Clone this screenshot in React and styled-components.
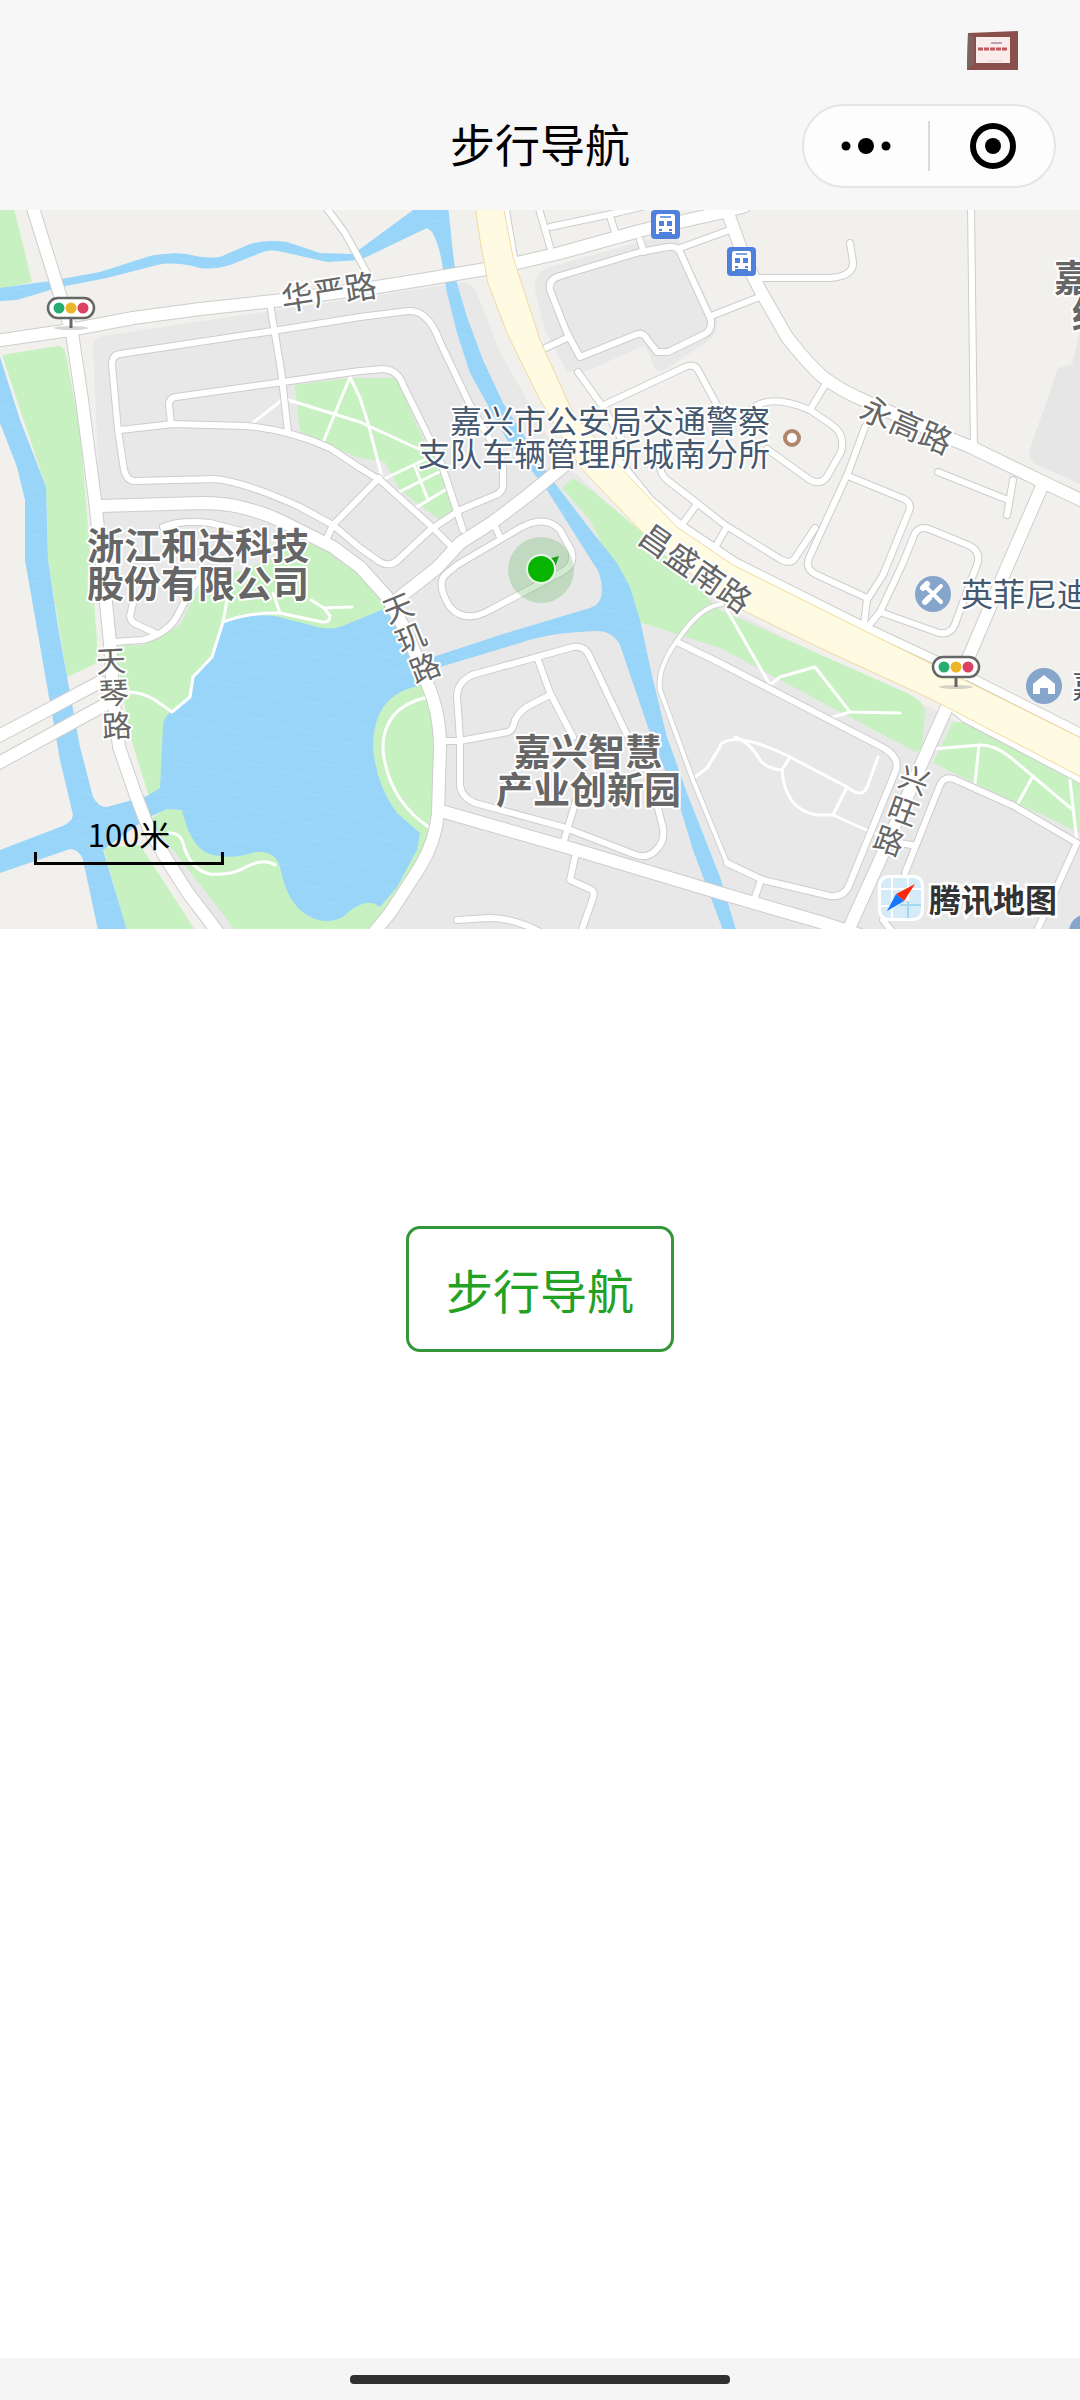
import styled, { createGlobalStyle } from "styled-components";

const GlobalStyle = createGlobalStyle`
  * {
    box-sizing: border-box;
  }
  body {
    margin: 0;
    background: #fff;
    font-family: "Noto Sans CJK SC", "Noto Sans", sans-serif;
  }
`;

// road centre lines, grouped by width
const mainRoads = [
  "M32 205L60 295L72 333L82 400L95 500L106 603L110 643L113 693L119 747L135 793L148 827L167 860L188 893L220 935",
  "M-5 341L70 330L133 318L200 309L283 300L377 287L427 279L480 270L517 263L560 253L643 230L720 213L745 206",
  "M100 506L200 503Q224 503 240 507Q265 513 283 522L333 547L360 567L387 597L407 633L427 683Q440 712 440 747L438 813Q436 840 420 867L390 913L372 935",
  "M725 205L745 260L760 290L787 337Q808 364 823 377Q840 390 863 400L937 433L973 448L1043 482L1085 502",
  "M1043 484L1010 560L973 647L947 707L920 767L880 860L846 935",
  "M441 811L563 846L720 893L820 922L860 935",
  "M-5 738L100 682",
  "M-5 765L110 702",
  "M400 597L437 568L460 543L493 522L527 496L570 461",
];

const streets = [
  "M270 304L281 370L288 432",
  "M360 317L273 331L120 354Q112 355 112 365L118 430L124 470Q127 481 135 481L215 479Q245 482 300 507L333 525L360 548L380 562Q389 567 397 561L430 530L460 510L498 494Q504 490 503 483L503 462L470 405L440 342Q428 309 408 311L360 317",
  "M171 423L169 405Q169 398 176 397L283 382L360 371L383 369Q398 370 403 385L440 460L450 490L463 530",
  "M120 430L173 424L247 426Q290 430 330 448L360 468L380 480L430 525L452 547",
  "M379 478L333 525L327 538",
  "M113 642L143 640Q165 634 175 620L190 592L205 570",
  "M133 603L130 616Q131 623 138 625L155 633",
  "M163 527Q180 520 210 523L245 532",
  "M457 565L520 528Q545 514 560 530L571 550Q576 565 562 572L490 610Q465 624 450 607Q436 585 445 575L457 565",
  "M494 524L500 537",
  "M328 210L345 233L368 275",
  "M538 205L550 247",
  "M550 227L607 215L645 206",
  "M610 216L615 232",
  "M640 252L560 276Q548 279 550 290L567 333L580 357L635 335Q643 331 647 339L657 352L668 352L705 334Q712 330 711 320L680 252Q677 246 668 247L640 252",
  "M640 240L644 252",
  "M680 248L727 231",
  "M711 316L757 298",
  "M543 349L567 338",
  "M578 372L603 407L625 445",
  "M606 404L685 367Q694 363 698 370L717 405",
  "M660 465Q660 474 667 480L697 503L725 525L780 559Q791 565 795 558L815 528",
  "M697 504L681 526",
  "M725 530L716 546",
  "M760 278L830 278Q854 276 853 262L850 243",
  "M971 205L974 450",
  "M825 385L810 410",
  "M752 409Q770 393 810 410L832 425Q846 435 841 452L828 475Q822 486 810 480L767 449",
  "M865 427L848 473L809 558Q805 568 815 574L867 598",
  "M848 476L904 499Q912 503 909 511L883 575L867 600L863 632",
  "M865 630L880 612L902 565L913 538Q917 525 929 529L968 545Q980 550 978 562L955 624Q951 635 939 633L880 612",
  "M938 472L1008 500",
  "M1013 480L1007 515",
  "M677 642L720 663L880 746Q900 756 896 770L850 883Q845 898 830 896L763 880L727 863",
  "M761 880L753 903",
  "M905 873L940 785Q944 776 954 779L1014 806L1077 843L1035 935",
  "M887 841L912 845",
  "M443 741L460 741L508 732Q513 730 515 720Q520 710 532 704L550 695",
  "M537 657L550 693L573 737",
  "M627 735L590 657Q585 645 573 647L472 675Q457 682 457 697L460 740L460 785Q461 797 475 803L563 827L636 855Q648 859 656 850Q665 842 663 828L657 805",
  "M563 844L577 797",
  "M575 857L570 880L590 889Q595 891 593 898L580 935",
  "M457 920L488 918Q515 918 540 932",
  "M883 920L895 935",
];

const lanes = [
  "M677 641Q657 668 660 690L693 780L727 863",
  "M677 641Q700 606 722 604",
];

const paths = [
  "M350 377L322 445",
  "M350 377L360 398L368 423L382 477",
  "M282 398L360 422L423 451",
  "M250 425L282 400",
  "M382 480L430 457",
  "M397 493L443 470",
  "M417 507L450 487",
  "M415 467L428 500",
  "M227 600L223 622L212 657L193 677L190 697L172 712L155 700Q142 692 127 692",
  "M223 622Q250 612 280 613L322 622Q330 623 330 616L324 608L352 607",
  "M273 593L280 613",
  "M311 600L324 608",
  "M168 833Q180 832 183 843Q190 870 210 874Q232 876 248 866Q265 858 275 865",
  "M428 697Q382 707 383 750Q388 800 430 828",
  "M727 610L770 685L780 677L815 667L850 712L900 713",
  "M850 712L830 718",
  "M720 745Q735 730 790 757L847 787Q863 800 868 785L878 757",
  "M735 737Q750 742 760 760Q767 769 782 770L790 757",
  "M782 770Q785 810 817 815L833 815L873 833L900 840",
  "M847 787L833 815",
  "M720 747L707 768L695 777",
  "M933 749L980 745Q995 745 1010 757L1073 810",
  "M979 745L975 783",
  "M1033 776L1017 805",
  "M1070 780L1077 843",
];

const greens = [
  "M0 205L13 205L32 282L0 289Z",
  "M2 355L58 346Q64 346 66 355L80 430L88 527L97 640L97 663L67 677L48 560L46 487Z",
  "M115 646L143 645L180 625L200 585L270 560L305 540L335 548L392 607L428 690L438 740L436 820L415 870L376 930L235 930L150 820L205 780L150 800L130 735L122 690Z",
  "M103 848L140 845L195 930L127 930Z",
  "M295 385L350 378L397 378L423 440L448 477L455 510L440 520L400 490L385 462L360 458L300 433Z",
  "M573 478L595 493L643 533L720 610L907 693Q925 702 925 713L923 740Q920 754 914 751L720 648L640 622L590 520L562 488Z",
  "M953 722L965 722L1080 784L1080 833L933 763Z",
];

const waters = [
  "M0 288L50 281L100 272L150 256Q170 252 187 254Q205 259 220 257L250 244Q266 239 287 242L320 253L353 254L360 249L420 205L448 205L453 253L457 283L467 317L483 360L503 403L527 440L547 473L593 533L617 563L630 587L640 620L653 680L667 737L687 793L720 877L736 930L723 930L693 850L680 807L650 733L620 645Q612 631 598 631Q550 632 520 643L430 670L430 658L503 634L590 608Q602 604 602 590Q602 574 593 563L547 490L507 440L470 373L457 333L447 293L442 263Q439 244 432 232L427 228L360 260L327 262L283 252Q270 249 263 252L230 265Q213 270 200 268Q175 261 157 265L107 278L60 287L17 300L0 301Z",
  "M0 357L20 420L33 453L46 487L48 560L58 627L70 693L80 747L93 797Q98 807 107 807L147 796L160 788L163 727Q163 718 170 713L190 697L193 677L212 657L223 623Q245 613 275 616L310 625Q330 632 345 625L384 609L400 620L424 685Q373 692 373 747Q376 785 397 813L420 833L417 850L397 887L380 907Q365 895 343 917Q325 926 307 915Q287 903 280 867Q275 850 255 852Q230 861 207 853Q190 845 182 810L167 809L147 818L103 850L127 930L98 930L83 860Q80 850 70 849L0 873L0 850L60 827Q72 823 73 815L60 760L25 560L25 500L17 467L0 423Z",
];

const highway =
  "M475 205L480 240L488 283L507 333L540 400L580 467L640 530L720 599L820 648L933 700L1085 779L1085 740L863 630L733 565L677 527L620 467L573 413L540 340L513 257L503 205Z";

const sideRoads = [
  "M504 205L513 257",
  "M620 463L650 500L680 525L735 562L865 627L940 662L1085 735",
  "M947 703L965 718L1085 781",
];

const Screen = styled.div`
  display: flex;
  flex-direction: column;
  min-height: 100vh;
`;

const Header = styled.header`
  background: #f7f7f7;
`;

const StatusBar = styled.div`
  display: flex;
  justify-content: flex-end;
  height: 82px;
  padding: 30px 61px 0;
`;

const NavBar = styled.div`
  display: grid;
  grid-template-columns: 1fr auto 1fr;
  align-items: center;
  height: 128px;
  padding: 0 24px;
`;

const Title = styled.h1`
  grid-column: 2;
  margin: 0;
  padding-bottom: 4px;
  color: #000;
  font-size: 45px;
  font-weight: 400;
  line-height: 64px;
`;

const Capsule = styled.div`
  display: flex;
  align-items: center;
  justify-self: end;
  width: 254px;
  height: 84px;
  border: 2px solid #e5e5e5;
  border-radius: 42px;
  background: #fdfdfd;
`;

const CapsuleButton = styled.button`
  display: flex;
  flex: 1;
  align-items: center;
  justify-content: center;
  height: 50px;
  padding: 0;
  border: 0;
  background: none;
`;

const CapsuleDivider = styled.span`
  width: 2px;
  height: 50px;
  background: #dadada;
`;

const MapArea = styled.section`
  position: relative;
  overflow: hidden;
`;

const MapCanvas = styled.svg`
  display: block;
  width: 100%;
  height: auto;
`;

const Lines = styled.g`
  fill: none;
  stroke: ${(p) => p.$color};
  stroke-width: ${(p) => p.$w};
  stroke-linecap: round;
  stroke-linejoin: round;
`;

const Label = styled.text`
  fill: ${(p) => p.$color || "#666"};
  font-size: ${(p) => p.$size || 30}px;
  font-weight: ${(p) => (p.$bold ? 700 : 400)};
  stroke: #fff;
  stroke-width: 4px;
  stroke-linejoin: round;
  paint-order: stroke;
`;

const ScaleBar = styled.div`
  position: absolute;
  left: 34px;
  bottom: 64px;
  width: 190px;
  height: 52px;
  color: #000;
  font-size: 31px;
  line-height: 42px;
  text-align: center;

  &::after {
    content: "";
    position: absolute;
    inset: auto 0 0;
    height: 10px;
    border: 3px solid #000;
    border-top: 0;
  }
`;

const Attribution = styled.div`
  position: absolute;
  right: 23px;
  bottom: 8px;
  display: flex;
  align-items: center;
  gap: 5px;
  color: #333;
  font-size: 32px;
  font-weight: 700;
  line-height: 46px;
  paint-order: stroke;
  -webkit-text-stroke: 5px #fff;
`;

const Main = styled.main`
  display: flex;
  flex: 1;
  align-items: flex-start;
  justify-content: center;
  padding-top: 297px;
`;

const NavigateButton = styled.button`
  padding: 28px 37px;
  border: 3px solid #339638;
  border-radius: 14px;
  background: #fff;
  color: #22a122;
  font-family: inherit;
  font-size: 47px;
  line-height: 64px;
`;

const HomeBar = styled.footer`
  display: flex;
  justify-content: center;
  height: 42px;
  padding-top: 17px;
  background: #f5f5f5;
`;

const HomeIndicator = styled.div`
  width: 380px;
  height: 9px;
  border-radius: 4px;
  background: #303030;
`;

const TrafficLight = ({ x, y }) => (
  <g transform={`translate(${x} ${y})`}>
    <ellipse cx="0" cy="20" rx="17" ry="2" fill="#999" opacity="0.4" />
    <path d="M0 10V20" stroke="#666" strokeWidth="3" />
    <rect x="-23" y="-10" width="46" height="20" rx="10" fill="#fff" stroke="#666" strokeWidth="2.5" />
    <circle cx="-12" r="5.5" fill="#27ac72" />
    <circle r="5.5" fill="#edb526" />
    <circle cx="12" r="5.5" fill="#dc4163" />
  </g>
);

const BusStop = ({ x, y }) => (
  <g transform={`translate(${x} ${y})`}>
    <rect width="29" height="29" rx="4" fill="#4f80dc" />
    <path d="M7 4H22Q24 4 24 7V24H21V22H8V24H5V7Q5 4 7 4Z" fill="#fff" />
    <path d="M9 7H20" stroke="#4f80dc" strokeWidth="1.5" />
    <path d="M8 11H13V16H8ZM16 11H21V16H16ZM8 19H11V21H8ZM18 19H21V21H18Z" fill="#4f80dc" />
  </g>
);

// street name that runs down the road, one glyph per point
const StreetName = ({ text, points, angle }) => (
  <g>
    {[...text].map((char, i) => (
      <Label
        key={char}
        $size={30}
        textAnchor="middle"
        y="11"
        transform={`translate(${points[i]}) rotate(${angle})`}
      >
        {char}
      </Label>
    ))}
  </g>
);

const Strokes = ({ lines, color, w }) => (
  <Lines $color={color} $w={w}>
    {lines.map((d) => (
      <path key={d} d={d} />
    ))}
  </Lines>
);

const CityMap = () => (
  <MapCanvas viewBox="0 210 1080 719" role="img" aria-label="地图">
    <defs>
      <pattern id="ripple" width="74" height="46" patternUnits="userSpaceOnUse">
        <path
          d="M4 8q9 6 20 5M40 4q8 5 17 4M22 25q10 6 21 4M56 34q7 4 14 3M2 38q8 4 15 4"
          fill="none"
          stroke="#b5e2fb"
          strokeWidth="1"
          opacity="0.35"
        />
      </pattern>
    </defs>
    <rect y="205" width="1080" height="730" fill="#f1f0ed" />
    <path
      d="M93 347Q94 338 103 336L270 311L460 283Q471 281 476 291L500 352L560 458L640 535L720 604L820 656L925 705L1080 788V935H215L148 827L150 800L128 700L110 640L100 510Z"
      fill="#e8e8e8"
    />
    <path
      d="M535 290Q534 272 550 267L675 232L716 318Q720 332 708 341L665 370Q655 374 652 362L645 345L585 372L567 372L545 330Z"
      fill="#e8e8e8"
    />
    <path d="M1080 330L1072 365L1058 368L1029 452Q1029 460 1035 464L1080 484Z" fill="#e6e6e7" />
    {greens.map((d) => (
      <path key={d} d={d} fill="#c7f1c0" />
    ))}
    {waters.map((d) => (
      <g key={d}>
        <path d={d} fill="#98d5f9" />
        <path d={d} fill="url(#ripple)" />
      </g>
    ))}

    <Strokes lines={paths} color="#fff" w={3} />
    <Strokes lines={lanes} color="#d2d2d2" w={6} />
    <Strokes lines={streets} color="#cdcdcd" w={8} />
    <Strokes lines={mainRoads} color="#cdcdcd" w={14} />
    <Strokes lines={sideRoads} color="#cdcdcd" w={10} />
    <Strokes lines={lanes} color="#fff" w={4} />
    <Strokes lines={streets} color="#fff" w={6} />
    <Strokes lines={mainRoads} color="#fff" w={12} />
    <Strokes lines={sideRoads} color="#fff" w={8} />
    <path d={highway} fill="#fffbe2" stroke="#f3d9a0" strokeWidth="1" />

    <TrafficLight x={71} y={308} />
    <TrafficLight x={956} y={667} />
    <BusStop x={651} y={210} />
    <BusStop x={727} y={247} />

    <circle cx="541" cy="570" r="33" fill="#58b358" opacity="0.28" />
    <path d="M548 559L559 556L555 567Z" fill="#16a016" />
    <circle cx="541" cy="569" r="14" fill="#07b400" stroke="#e9f6e8" strokeWidth="2" />

    <circle cx="792" cy="438" r="7" fill="#fff" stroke="#ad866b" strokeWidth="4" />

    <g transform="translate(933 594)">
      <circle r="18" fill="#86a5ca" />
      <path d="M-7 -7L8 8M8 -8L-5 5" stroke="#fff" strokeWidth="4" strokeLinecap="round" />
      <path d="M-10 -6L-6 -10M-8 8L-4 4" stroke="#fff" strokeWidth="6" strokeLinecap="round" />
    </g>
    <g transform="translate(1044 686)">
      <circle r="18" fill="#86a5ca" />
      <path d="M0 -11L11 -2V8H4V2H-4V8H-11V-2Z" fill="#fff" strokeLinejoin="round" />
    </g>
    <circle cx="1087" cy="932" r="18" fill="#86a5ca" />

    <Label $size={32} textAnchor="middle" y="11" transform="translate(329 293) rotate(-9)">
      华严路
    </Label>
    <Label $size={32} textAnchor="middle" y="11" transform="translate(906 426) rotate(23)">
      永高路
    </Label>
    <Label $size={32} textAnchor="middle" y="11" transform="translate(695 569) rotate(35)">
      昌盛南路
    </Label>
    <StreetName text="天琴路" points={["111 661", "114 693", "117 726"]} angle={-3} />
    <StreetName text="天玑路" points={["398 608", "411 638", "425 668"]} angle={-22} />
    <StreetName text="兴旺路" points={["914 780", "903 811", "889 841"]} angle={20} />

    <Label $size={37} $bold x="87" y="560">浙江和达科技</Label>
    <Label $size={37} $bold x="87" y="598">股份有限公司</Label>
    <Label $size={37} $bold x="514" y="766">嘉兴智慧</Label>
    <Label $size={37} $bold x="496" y="804">产业创新园</Label>
    <Label $size={37} $bold x="1054" y="292">嘉</Label>
    <Label $size={37} $bold x="1072" y="329">纺</Label>
    <Label $size={32} $color="#44586f" x="450" y="433">嘉兴市公安局交通警察</Label>
    <Label $size={32} $color="#44586f" x="418" y="466">支队车辆管理所城南分所</Label>
    <Label $size={32} $color="#44586f" x="961" y="606">英菲尼迪</Label>
    <Label $size={32} $color="#44586f" x="1072" y="698">嘉</Label>
  </MapCanvas>
);

const App = () => {
  return (
    <Screen>
      <GlobalStyle />
      <Header>
        <StatusBar>
          <svg width="52" height="42" viewBox="0 0 52 42" aria-hidden="true">
            <path d="M1 3L51 1V40L0 40Z" fill="#8b4f4b" />
            <path d="M0 40L1 3L7 7V34Z" fill="#7d6260" />
            <path d="M9 7L43 7V33L9 33Z" fill="#fbecec" />
            <path d="M24 13H35" stroke="#b8a4b4" strokeWidth="2" />
            <path d="M11 19H40" stroke="#c0575d" strokeWidth="3" strokeDasharray="5 1" />
            <path d="M21 31H35" stroke="#f0c9c9" strokeWidth="1" />
          </svg>
        </StatusBar>
        <NavBar>
          <Title>步行导航</Title>
          <Capsule>
            <CapsuleButton aria-label="更多">
              <svg width="52" height="18" viewBox="0 0 52 18">
                <circle cx="6" cy="9" r="4.5" />
                <circle cx="26" cy="9" r="8" />
                <circle cx="46" cy="9" r="4.5" />
              </svg>
            </CapsuleButton>
            <CapsuleDivider />
            <CapsuleButton aria-label="关闭">
              <svg width="48" height="48" viewBox="0 0 48 48">
                <circle cx="25" cy="24" r="20" fill="none" stroke="#000" strokeWidth="6" />
                <circle cx="25" cy="24" r="8" />
              </svg>
            </CapsuleButton>
          </Capsule>
        </NavBar>
      </Header>

      <MapArea>
        <CityMap />
        <ScaleBar>100米</ScaleBar>
        <Attribution>
          <svg width="46" height="46" viewBox="0 0 46 46" aria-hidden="true">
            <rect width="46" height="46" rx="10" fill="#fff" />
            <rect x="3" y="3" width="40" height="40" rx="8" fill="#d6ebf8" />
            <path d="M14 3V43M30 3V26M3 14H43M3 31H14" stroke="#fff" strokeWidth="2" />
            <path d="M30 26V43M22 30H43" stroke="#a5d8ec" strokeWidth="2" />
            <path d="M37 9L26 26L18 19Z" fill="#fb2a0d" />
            <path d="M9 36L18 19L26 26Z" fill="#1677ff" />
          </svg>
          腾讯地图
        </Attribution>
      </MapArea>

      <Main>
        <NavigateButton>步行导航</NavigateButton>
      </Main>

      <HomeBar>
        <HomeIndicator />
      </HomeBar>
    </Screen>
  );
};

export default App;
